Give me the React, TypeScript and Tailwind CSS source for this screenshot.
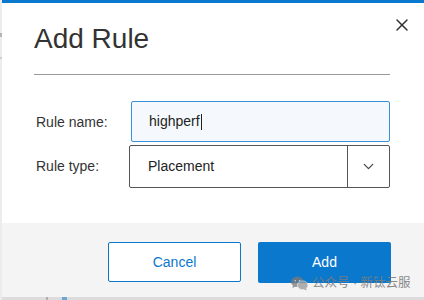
import { X, ChevronDown } from "lucide-react";

const WeChatIcon = () => (
  <svg width="17" height="15" viewBox="0 0 24 21" fill="#7a7a7a" opacity="0.85">
    <ellipse cx="9" cy="8" rx="9" ry="7.5" />
    <path d="M3 13 L2 17 L7 14.5 Z" />
    <ellipse cx="16.5" cy="13" rx="7.5" ry="6.2" fill="#9a9a9a" stroke="#f4f4f4" strokeWidth="1" />
    <path d="M21 17 L22.5 20.5 L18 18.5 Z" fill="#9a9a9a" />
    <circle cx="6" cy="6.5" r="1.1" fill="#f4f4f4" />
    <circle cx="12" cy="6.5" r="1.1" fill="#f4f4f4" />
  </svg>
);

const App = () => {
  return (
    <div
      className="relative flex h-[300px] w-[424px] overflow-hidden bg-white text-[#333]"
      style={{ fontFamily: '"Liberation Sans", Arial, "Noto Sans CJK SC", sans-serif' }}
    >
      {/* left edge of page behind dialog */}
      <div className="flex w-[2px] flex-col bg-[#ececec]">
        <span className="mt-[33px] h-[4px] w-full bg-[#b5b5b5]" />
        <span className="mt-[20px] h-[2px] w-full bg-[#cfcfcf]" />
      </div>

      <div className="flex flex-1 flex-col">
        <div className="h-[3px] bg-[#0a78cc]" />

        {/* header */}
        <div className="relative px-[32px] pt-[20px]">
          <h1 className="text-[28px] leading-[32px] font-normal text-[#333]">Add Rule</h1>
          <div className="mt-[19px] mr-[2px] h-px bg-[#999]" />
          <button className="absolute top-[12px] right-[12px] text-[#333]">
            <X size={20} strokeWidth={1.8} />
          </button>
        </div>

        {/* form */}
        <div className="flex flex-col gap-[3px] pt-[26px] pr-[34px] pl-[34px]">
          <div className="flex items-center">
            <label className="w-[95px] pt-[2px] text-[14px]">Rule name:</label>
            <div className="flex h-[41px] flex-1 items-center rounded-[2px] border border-[#3b8fd9] bg-[#f5f9fd] pl-[17px] text-[14px] text-[#222]">
              highperf
              <span className="ml-px h-[16px] w-px bg-[#222]" />
            </div>
          </div>
          <div className="flex items-center">
            <label className="w-[93px] text-[14px]">Rule type:</label>
            <div className="flex h-[43px] flex-1 items-stretch rounded-[2px] border border-[#555] bg-white text-[14px] text-[#222]">
              <span className="flex flex-1 items-center pl-[18px]">Placement</span>
              <span className="flex w-[42px] items-center justify-center border-l border-[#555] text-[#444]">
                <ChevronDown size={17} strokeWidth={1.8} />
              </span>
            </div>
          </div>
        </div>

        {/* footer */}
        <div className="mt-auto flex h-[74px] items-start justify-end gap-[17px] bg-[#f4f4f4] pt-[19px] pr-[33px]">
          <button className="h-[40px] w-[133px] rounded-[2px] border border-[#0a78cc] bg-white text-[14px] text-[#0a78cc]">
            Cancel
          </button>
          <button className="h-[41px] w-[133px] rounded-[2px] bg-[#0a78cc] text-[14px] text-white">
            Add
          </button>
        </div>
        <div className="flex h-[3px] bg-[#dcdcdc]">
          <span className="ml-[44px] w-[2px] bg-[#b0b0b0]" />
          <span className="ml-[14px] w-[5px] bg-[#6aa6d6]" />
        </div>
      </div>

      {/* watermark */}
      <div className="absolute top-[274px] left-[291px] flex items-center gap-[4px] text-[12.5px] text-[#7e7e7e] opacity-90">
        <WeChatIcon />
        <span>公众号 · 新钛云服</span>
      </div>
    </div>
  );
};

export default App;
